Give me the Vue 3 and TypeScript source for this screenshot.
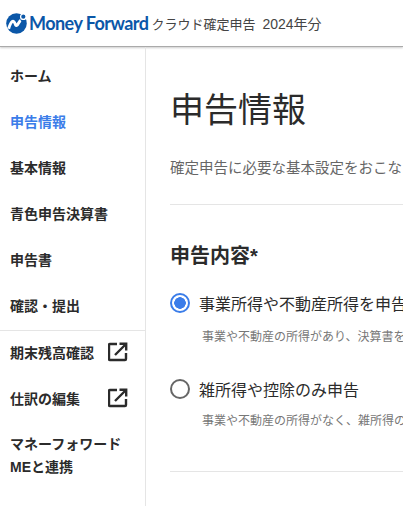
<script setup lang="ts">
interface NavItem {
  label: string;
  active?: boolean;
  external?: boolean;
}

const mainNav: NavItem[] = [
  { label: "ホーム" },
  { label: "申告情報", active: true },
  { label: "基本情報" },
  { label: "青色申告決算書" },
  { label: "申告書" },
  { label: "確認・提出" },
];

const subNav: NavItem[] = [
  { label: "期末残高確認", external: true },
  { label: "仕訳の編集", external: true },
];
</script>

<template>
  <div class="page">
    <header class="header">
      <svg class="logo-mark" width="21" height="21" viewBox="0 0 20 20">
        <circle cx="10" cy="10" r="9.8" fill="#0b57a8" />
        <path d="M2.5 15 C5 7 7 6 9 11 C10.5 14.500 12 8 14 7" fill="none" stroke="#fff" stroke-width="2.8" />
        <circle cx="16.500" cy="3.500" r="2.600" fill="#0b57a8" stroke="#fff" stroke-width="1.200" />
      </svg>
      <span class="logo-text">Money Forward</span>
      <span class="product">クラウド確定申告</span>
      <span class="year">2024年分</span>
    </header>
    <div class="body">
      <nav class="side">
        <a v-for="item in mainNav" :key="item.label" class="nav-item" :class="{ active: item.active }">{{ item.label }}</a>
        <div class="nav-line"></div>
        <a v-for="item in subNav" :key="item.label" class="nav-item ext">
          <span>{{ item.label }}</span>
          <svg width="20" height="20" viewBox="0 0 20 20" fill="none" stroke="#2b2b2b" stroke-width="2.400">
            <path d="M9 2 H2 a1 1 0 0 0 -1 1 V17 a1 1 0 0 0 1 1 H17 a1 1 0 0 0 1 -1 V11" />
            <path d="M7 13 L17.5 2.5 M11.5 1.8 H18.2 V8.5" />
          </svg>
        </a>
        <a class="nav-item two-line">マネーフォワード<br />MEと連携</a>
      </nav>
      <main class="main">
        <h1 class="title">申告情報</h1>
        <p class="desc">確定申告に必要な基本設定をおこないます。</p>
        <hr class="rule" />
        <h2 class="section">申告内容*</h2>
        <div class="option first">
          <span class="radio on"></span>
          <span class="option-label">事業所得や不動産所得を申告する</span>
        </div>
        <p class="hint hint-first">事業や不動産の所得があり、決算書を作成する場合</p>
        <div class="option second">
          <span class="radio"></span>
          <span class="option-label">雑所得や控除のみ申告</span>
        </div>
        <p class="hint">事業や不動産の所得がなく、雑所得のみの場合</p>
        <hr class="rule last" />
      </main>
    </div>
  </div>
</template>

<style>
html,
body {
  margin: 0;
  overflow: hidden;
}
</style>

<style scoped>
.page {
  width: 403px;
  height: 506px;
  overflow: hidden;
  background: #fff;
  font-family: "Liberation Sans", "Noto Sans CJK JP", sans-serif;
  color: #2b2b2b;
}

.header {
  height: 46px;
  display: flex;
  align-items: center;
  padding-left: 6px;
  border-bottom: 1px solid #aaa;
  box-shadow: 0 1px 2px rgba(0, 0, 0, 0.2);
  white-space: nowrap;
}

.logo-mark {
  flex: none;
  margin-right: 2px;
}

.logo-text {
  font-family: Lato, sans-serif;
  font-size: 18px;
  font-weight: 700;
  letter-spacing: -0.55px;
  color: #0b57a8;
  margin-right: 3px;
}

.product,
.year {
  font-size: 13px;
  color: #444;
}

.year {
  font-size: 14px;
  margin-left: 7px;
}

.body {
  display: flex;
  height: 459px;
}

.side {
  flex: none;
  width: 146px;
  box-sizing: border-box;
  border-right: 1px solid #e5e5e5;
  padding-top: 5px;
}

.nav-item {
  height: 46px;
  display: flex;
  align-items: center;
  padding-left: 10px;
  font-size: 14px;
  font-weight: 700;
  color: #2b2b2b;
}

.nav-item.active {
  color: #3b7de9;
}

.nav-line {
  height: 1px;
  margin: 2px 0 -2px;
  background: #e5e5e5;
}

.nav-item.ext {
  justify-content: space-between;
  padding-right: 17px;
}

.nav-item.two-line {
  display: block;
  height: auto;
  padding-top: 12px;
  line-height: 23px;
}

.main {
  flex: 1;
  min-width: 0;
  padding-left: 24px;
  white-space: nowrap;
  overflow: hidden;
}

.title {
  margin: 41px 0 0;
  font-size: 34px;
  font-weight: 400;
  line-height: 44px;
}

.desc {
  margin: 26px 0 0;
  font-size: 14.5px;
  line-height: 20px;
  color: #666;
}

.rule {
  margin: 26px 0 0;
  border: 0;
  border-top: 1px solid #e5e5e5;
}

.section {
  margin: 38px 0 0;
  font-size: 20px;
  font-weight: 700;
  line-height: 26px;
}

.option {
  display: flex;
  align-items: center;
  gap: 9px;
  height: 24px;
}

.option.first {
  margin-top: 22px;
}

.option.second {
  margin-top: 31px;
}

.option-label {
  font-size: 16px;
}

.radio {
  flex: none;
  width: 20px;
  height: 20px;
  box-sizing: border-box;
  border: 2px solid #666;
  border-radius: 50%;
}

.radio.on {
  border-color: #3b7de9;
  background: radial-gradient(circle, #3b7de9 0 5.5px, #fff 6px);
}

.hint {
  margin: 11px 0 0 32px;
  font-size: 12px;
  line-height: 18px;
  color: #777;
}

.hint.hint-first {
  margin-top: 13px;
}

.rule.last {
  margin-top: 41px;
}
</style>
